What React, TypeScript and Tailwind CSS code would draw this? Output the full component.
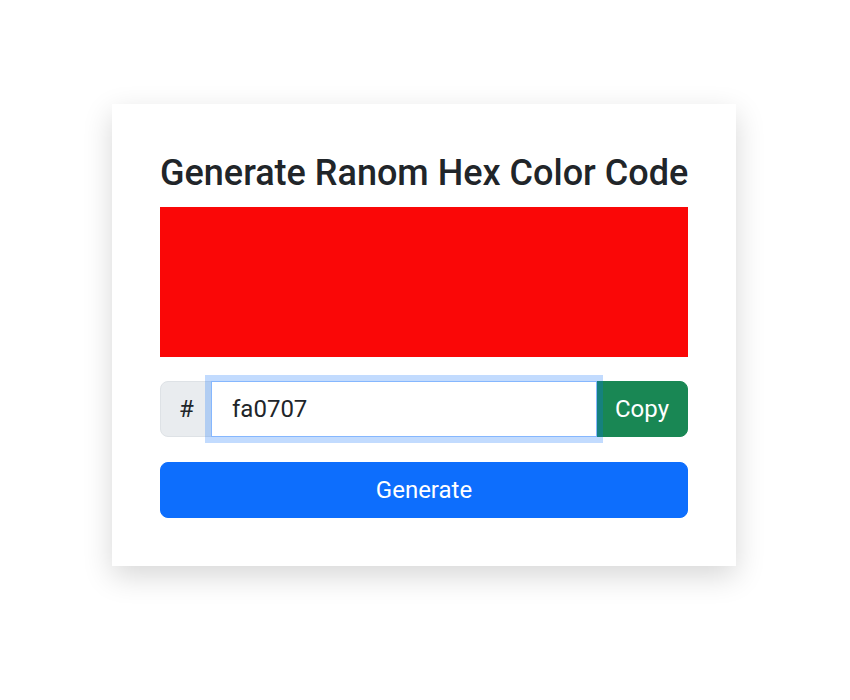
import React, { useState } from 'react';

function randomHex() {
  return Math.floor(Math.random() * 0xffffff).toString(16).padStart(6, '0');
}

export default function App() {
  const [hex, setHex] = useState<string>('fa0707');

  return (
    <div className="min-h-screen bg-white pt-[104px] font-['Roboto','Liberation_Sans',sans-serif] text-[#212529]">
      <div className="flex justify-center pr-[2px]">
        <div className="w-[624px] bg-white p-12 shadow-[0_10px_28px_rgba(0,0,0,0.16)]">
          <h2 className="mb-3 h-[43px] whitespace-nowrap text-[36px] font-medium leading-[43px]">Generate Ranom Hex Color Code</h2>

          {/* Preview */}
          <div className="mb-6 h-[150px] w-full" style={{ backgroundColor: `#${hex}` }} />

          {/* Input group */}
          <div className="flex h-14 w-full">
            <span className="flex w-[52px] shrink-0 items-center justify-center rounded-l-lg border border-[#dee2e6] bg-[#e9ecef] pl-px text-2xl">
              #
            </span>
            <input
              type="text"
              readOnly
              value={hex}
              className="relative z-10 -ml-px min-w-0 flex-1 border border-[#86b7fe] bg-white pl-5 pr-4 text-2xl text-[#212529] shadow-[0_0_0_6px_rgba(13,110,253,0.25)] outline-none"
            />
            <button
              type="button"
              onClick={() => navigator.clipboard?.writeText(`#${hex}`)}
              className="-ml-px w-[92px] shrink-0 rounded-r-lg border border-[#198754] bg-[#198754] text-2xl text-white"
            >
              Copy
            </button>
          </div>

          <button
            type="button"
            onClick={() => setHex(randomHex())}
            className="mt-[25px] h-14 w-full rounded-lg border border-[#0d6efd] bg-[#0d6efd] text-2xl text-white"
          >
            Generate
          </button>
        </div>
      </div>
    </div>
  );
}
